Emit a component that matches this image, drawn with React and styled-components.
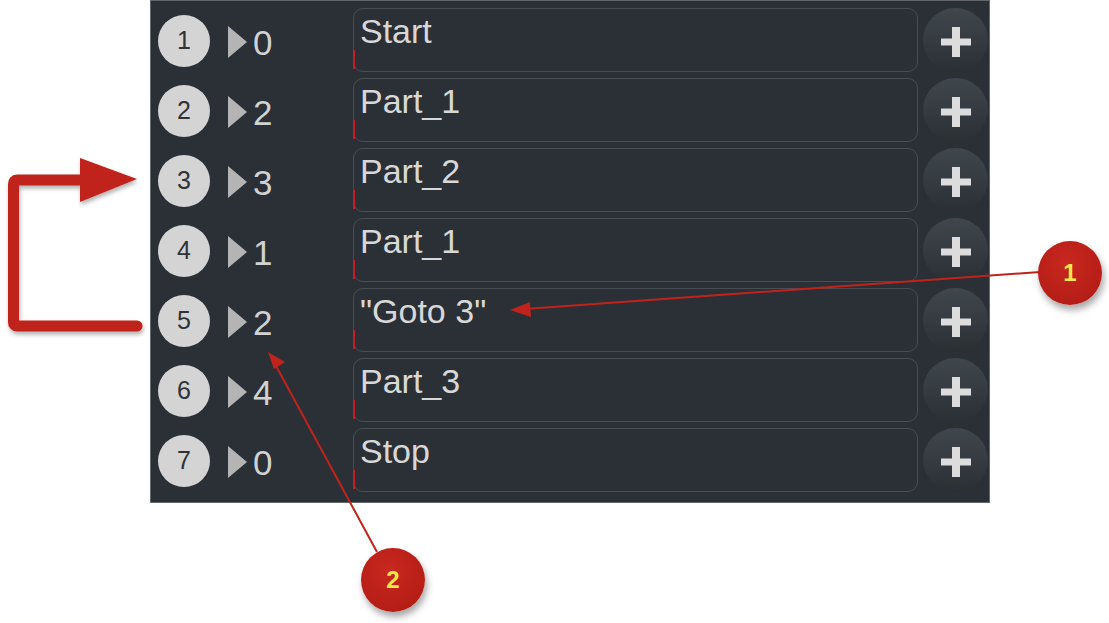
import React from 'react';
import styled, { createGlobalStyle } from 'styled-components';

const Global = createGlobalStyle`
  html, body {
    margin: 0;
    padding: 0;
    background: #ffffff;
  }
  body {
    font-family: "Liberation Sans", Arial, sans-serif;
  }
`;

const Page = styled.div`
  position: relative;
  width: 1109px;
  height: 623px;
  overflow: hidden;
`;

const Panel = styled.div`
  box-sizing: border-box;
  margin-left: 150px;
  width: 840px;
  height: 503px;
  background: #2b3036;
  border: 1px solid #62676c;
  padding: 7px 0 0 7px;
  display: flex;
  flex-direction: column;
  gap: 6px;
`;

const Row = styled.div`
  display: flex;
  align-items: center;
  height: 64px;
`;

const Step = styled.div`
  width: 52px;
  height: 52px;
  margin-top: 1px;
  border-radius: 50%;
  background: #d4d4d4;
  color: #2f3337;
  font-size: 25px;
  line-height: 25px;
  display: flex;
  align-items: center;
  justify-content: center;
`;

const Jump = styled.div`
  box-sizing: border-box;
  width: 143px;
  padding-left: 18px;
  margin-top: 4px;
  display: flex;
  align-items: center;
  gap: 6px;
`;

const Pointer = styled.span`
  width: 0;
  height: 0;
  border-top: 16px solid transparent;
  border-bottom: 16px solid transparent;
  border-left: 19px solid #b4b4b4;
`;

const Target = styled.span`
  font-size: 35px;
  line-height: 35px;
  color: #d2d2d2;
`;

const Label = styled.div`
  position: relative;
  box-sizing: border-box;
  width: 565px;
  height: 64px;
  border: 1px solid #474d53;
  border-radius: 10px;
  padding: 5px 6px;
  font-size: 34px;
  line-height: 34px;
  color: #d8d8d8;
  white-space: nowrap;

  &::before {
    content: '';
    position: absolute;
    left: -1px;
    bottom: 2px;
    width: 2px;
    height: 19px;
    background: #c21f2a;
  }
`;

const AddButton = styled.button`
  margin-left: 5px;
  width: 65px;
  height: 64px;
  padding: 0;
  border: none;
  border-radius: 50%;
  background: linear-gradient(#40474c, #2a2f34);
  display: flex;
  align-items: center;
  justify-content: center;
  padding-top: 3px;
  cursor: pointer;
`;

const Overlay = styled.svg`
  position: absolute;
  left: 0;
  top: 0;
  pointer-events: none;
`;

const Callout = styled.div`
  position: absolute;
  left: ${p => p.$x - 32}px;
  top: ${p => p.$y - 32}px;
  width: 64px;
  height: 64px;
  border-radius: 50%;
  background: radial-gradient(circle at 45% 35%, #c8281f, #b41d16 75%);
  box-shadow: 2px 5px 7px rgba(0, 0, 0, 0.35);
  color: #f7ea48;
  font-size: 24px;
  font-weight: bold;
  display: flex;
  align-items: center;
  justify-content: center;
`;

const steps = [
  { n: 1, to: 0, label: 'Start' },
  { n: 2, to: 2, label: 'Part_1' },
  { n: 3, to: 3, label: 'Part_2' },
  { n: 4, to: 1, label: 'Part_1' },
  { n: 5, to: 2, label: '"Goto 3"' },
  { n: 6, to: 4, label: 'Part_3' },
  { n: 7, to: 0, label: 'Stop' },
];

const PlusIcon = () => (
  <svg width="30" height="30" viewBox="0 0 30 30">
    <rect x="0" y="11.5" width="30" height="7" fill="#dcdcdc" />
    <rect x="11" y="0" width="8" height="30" fill="#dcdcdc" />
  </svg>
);

export default function App() {
  return (
    <Page>
      <Global />
      <Panel>
        {steps.map(s => (
          <Row key={s.n}>
            <Step>{s.n}</Step>
            <Jump>
              <Pointer />
              <Target>{s.to}</Target>
            </Jump>
            <Label>{s.label}</Label>
            <AddButton aria-label="add">
              <PlusIcon />
            </AddButton>
          </Row>
        ))}
      </Panel>

      <Overlay width="1109" height="623" viewBox="0 0 1109 623">
        <defs>
          <filter id="shadow" x="-20%" y="-20%" width="140%" height="140%">
            <feDropShadow dx="1" dy="3" stdDeviation="2" floodColor="#000" floodOpacity="0.3" />
          </filter>
        </defs>
        <g filter="url(#shadow)" fill="#c0231b" stroke="#c0231b">
          <path
            d="M137 326 H17 Q13.5 326 13.5 322 V184 Q13.5 180 17 180 H82"
            fill="none"
            strokeWidth="11"
            strokeLinecap="round"
            strokeLinejoin="round"
          />
          <polygon points="80,158 80,202 137,179" stroke="none" />
        </g>
        <g fill="#c0231b" stroke="#c0231b">
          <line x1="1040" y1="272" x2="525" y2="309" strokeWidth="2" />
          <polygon points="510,310 530,302 531,317" stroke="none" />
          <line x1="377" y1="552" x2="275" y2="364" strokeWidth="2" />
          <polygon points="268,352 285,362 274,369" stroke="none" />
        </g>
      </Overlay>
      <Callout $x={1070} $y={273}>1</Callout>
      <Callout $x={393} $y={580}>2</Callout>
    </Page>
  );
}
